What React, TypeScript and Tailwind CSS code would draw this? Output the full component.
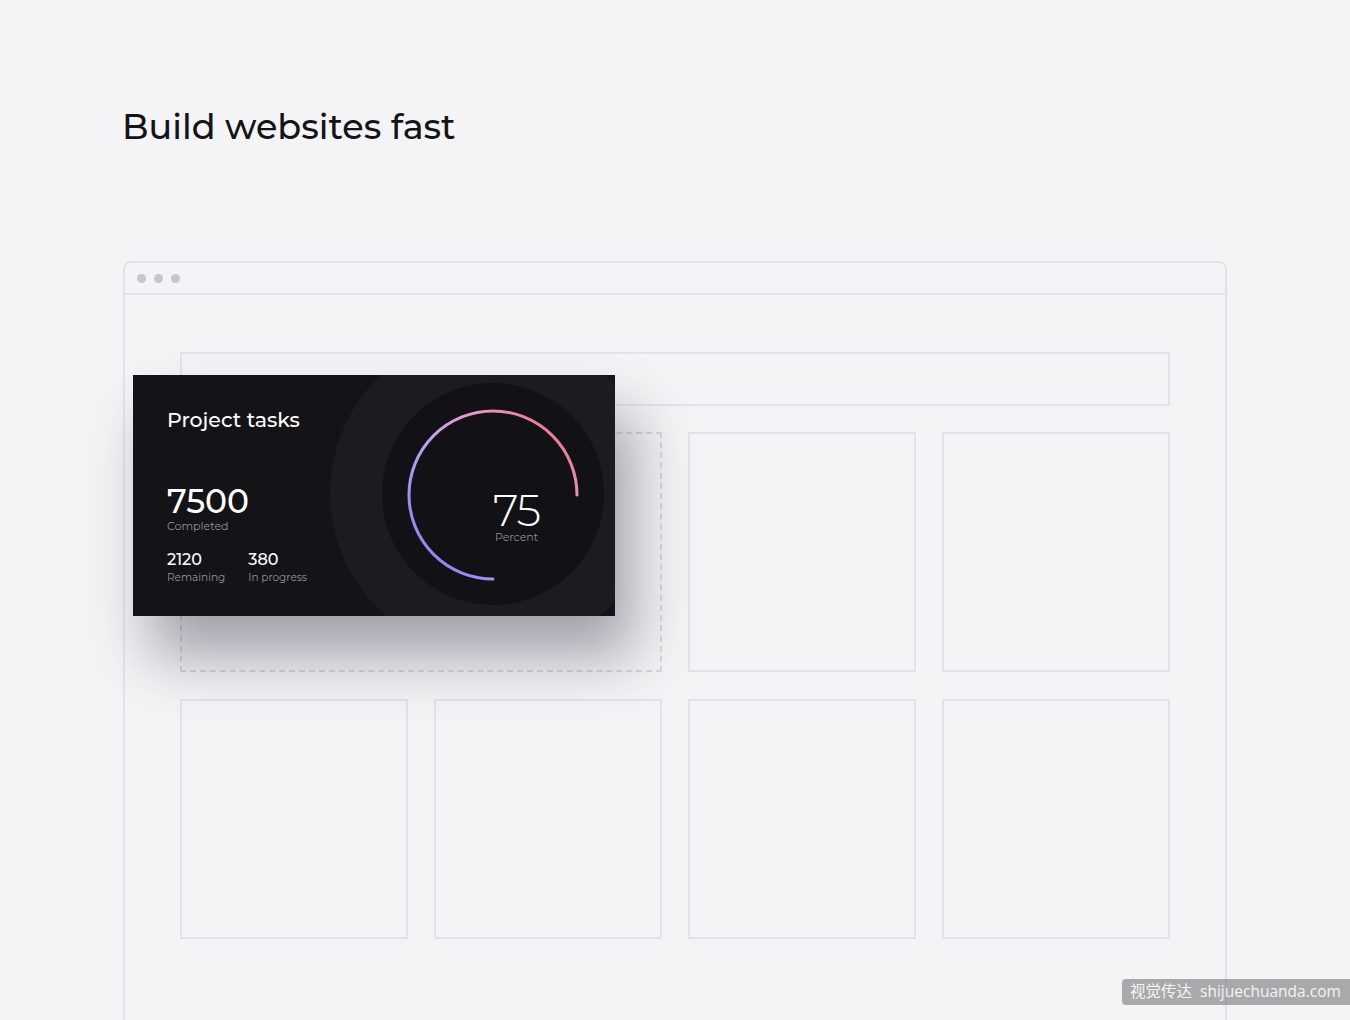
import React from 'react';

const font = { fontFamily: '"Montserrat", "Lato", "Noto Sans", sans-serif' };

function Gauge() {
  // 75% arc from 6 o'clock clockwise to 3 o'clock
  const r = 84;
  const cx = 111;
  const cy = 112;
  return (
    <svg width="222" height="222" viewBox="0 0 222 222" className="absolute inset-0">
      <defs>
        <linearGradient id="arcGrad" x1="0" y1="1" x2="1" y2="0">
          <stop offset="0%" stopColor="#7f7cf4" />
          <stop offset="45%" stopColor="#b8a2ee" />
          <stop offset="70%" stopColor="#e59ac6" />
          <stop offset="100%" stopColor="#f2626f" />
        </linearGradient>
      </defs>
      <path
        d={`M ${cx} ${cy + r} A ${r} ${r} 0 1 1 ${cx + r} ${cy}`}
        fill="none"
        stroke="url(#arcGrad)"
        strokeWidth="3"
        strokeLinecap="round"
      />
    </svg>
  );
}

function TaskCard() {
  return (
    <div
      className="absolute left-[-47px] top-[23px] w-[482px] h-[241px] bg-[#141317] overflow-hidden shadow-[18px_40px_55px_rgba(60,60,80,0.45)]"
      style={font}
    >
      <div className="absolute left-[197px] top-[-45px] w-[326px] h-[326px] rounded-full bg-[#1c1b20]" />
      <div className="absolute left-[249px] top-[8px] w-[222px] h-[222px] rounded-full bg-[#121116]">
        <Gauge />
        <div className="absolute left-[111px] top-[108px] flex flex-col items-center">
          <span className="text-[44px] leading-[38px] font-light text-white tracking-tight">75</span>
          <span className="text-[11px] leading-none mt-[3px] text-[#8e8d93]">Percent</span>
        </div>
      </div>
      <div className="relative flex flex-col pl-[34px] pt-[35px] text-white">
        <div className="text-[20.5px] leading-none font-medium">Project tasks</div>
        <div className="mt-[54px] text-[33px] leading-none font-medium">7500</div>
        <div className="text-[11px] leading-none mt-[3px] text-[#95949a]">Completed</div>
        <div className="flex gap-[23px] mt-[20px]">
          <div className="flex flex-col">
            <span className="text-[16px] leading-none font-medium">2120</span>
            <span className="text-[10.5px] leading-none mt-[5px] text-[#95949a]">Remaining</span>
          </div>
          <div className="flex flex-col">
            <span className="text-[16px] leading-none font-medium">380</span>
            <span className="text-[10.5px] leading-none mt-[5px] text-[#95949a]">In progress</span>
          </div>
        </div>
      </div>
    </div>
  );
}

export default function App() {
  const cell = 'h-[240px] border-2 border-[#e3e3e7]';
  return (
    <div className="relative h-[1020px] overflow-hidden bg-[#f4f4f6]" style={font}>
      <h1 className="pl-[122px] pt-[105px] text-[35px] leading-[44px] font-medium text-[#141418]">
        Build websites fast
      </h1>

      <div className="ml-[123px] mt-[112px] w-[1104px] h-[900px] border-2 border-[#e3e3e7] rounded-t-[8px]">
        <div className="h-[32px] flex items-center gap-[8px] pl-[12px] border-b-2 border-[#e3e3e7]">
          <span className="w-[9px] h-[9px] rounded-full bg-[#c7c7cb]" />
          <span className="w-[9px] h-[9px] rounded-full bg-[#c7c7cb]" />
          <span className="w-[9px] h-[9px] rounded-full bg-[#c7c7cb]" />
        </div>
        <div className="relative mt-[57px] mx-[55px] flex flex-col gap-[26px]">
          <div className="h-[54px] border-2 border-[#e3e3e7]" />
          <div className="grid grid-cols-4 gap-x-[26px] gap-y-[27px]">
            <div className="col-span-2 h-[240px] border-2 border-dashed border-[#d6d6da]" />
            <div className={cell} />
            <div className={cell} />
            <div className={cell} />
            <div className={cell} />
            <div className={cell} />
            <div className={cell} />
          </div>
          <TaskCard />
        </div>
      </div>

      <div
        className="absolute left-[1122px] top-[979px] w-[240px] h-[26px] rounded-[4px] bg-[rgba(150,150,152,0.8)] pl-[8px] flex items-center text-[15.5px] text-[#f4f4f4]"
        style={{ fontFamily: '"Open Sans", "Noto Sans CJK SC", sans-serif' }}
      >
        视觉传达&nbsp;&nbsp;shijuechuanda.com
      </div>
    </div>
  );
}
